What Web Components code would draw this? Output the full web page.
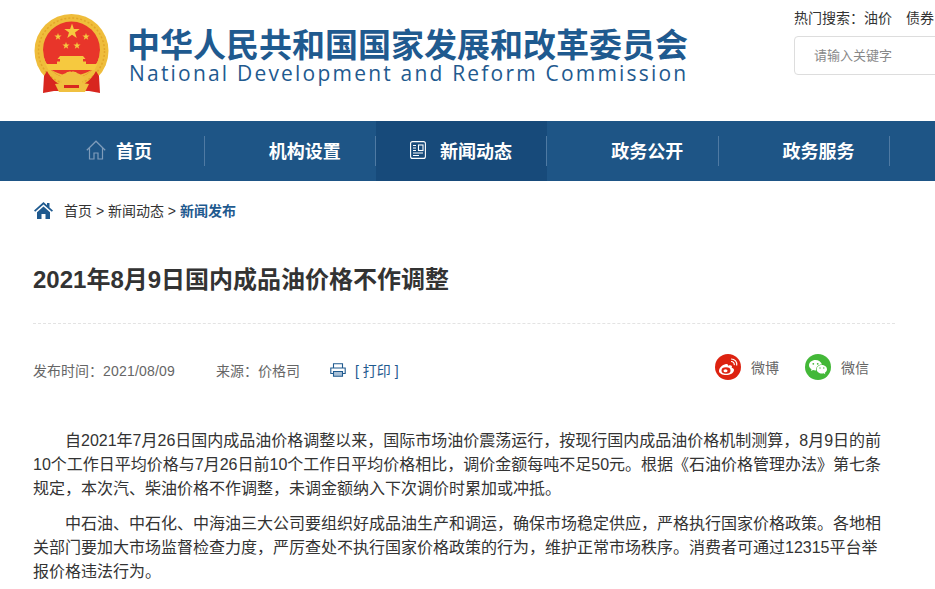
<!DOCTYPE html>
<html lang="zh">
<head>
<meta charset="utf-8">
<title>2021年8月9日国内成品油价格不作调整</title>
<style>
  html, body { margin: 0; padding: 0; background: #fff; }
  body {
    width: 935px;
    height: 589px;
    overflow: hidden;
    font-family: "Liberation Sans", "Noto Sans CJK SC", sans-serif;
    color: #333;
  }
</style>
</head>
<body>
<site-header></site-header>
<site-nav>
  <nav-item pad="52.500">
    <svg slot="icon" width="20" height="20" viewBox="0 0 20 20" fill="none" stroke="#7f9cba" stroke-width="1.2"><path d="M.8 10.2 10 1.2l9.200 9M3.500 8v11h4.500v-6h4v6h4.500V8"/></svg>
    首页
  </nav-item>
  <nav-item pad="64">机构设置</nav-item>
  <nav-item pad="34" active>
    <svg slot="icon" style="margin-right:4px" width="16" height="18" viewBox="0 0 16 18" fill="none" stroke="#fff" stroke-width="1.100"><rect x=".6" y=".6" width="14.800" height="16.800" rx="2"/><path d="M3 4.500h3M3 7h3M3 9.500h3M3 12h10M3 14.500h6"/><rect x="8.500" y="4" width="4.500" height="5.500"/></svg>
    新闻动态
  </nav-item>
  <nav-item pad="64">政务公开</nav-item>
  <nav-item pad="64">政务服务</nav-item>
</site-nav>
<bread-crumb></bread-crumb>
<news-article>
  <span slot="title">2021年8月9日国内成品油价格不作调整</span>
  <article-meta slot="meta"></article-meta>
  <p>自2021年7月26日国内成品油价格调整以来&#xFF0C;国际市场油价震荡运行&#xFF0C;按现行国内成品油价格机制测算&#xFF0C;8月9日的前10个工作日平均价格与7月26日前10个工作日平均价格相比&#xFF0C;调价金额每吨不足50元。根据《石油价格管理办法》第七条规定&#xFF0C;本次汽、柴油价格不作调整&#xFF0C;未调金额纳入下次调价时累加或冲抵。</p>
  <p>中石油、中石化、中海油三大公司要组织好成品油生产和调运&#xFF0C;确保市场稳定供应&#xFF0C;严格执行国家价格政策。各地相关部门要加大市场监督检查力度&#xFF0C;严厉查处不执行国家价格政策的行为&#xFF0C;维护正常市场秩序。消费者可通过12315平台举报价格违法行为。</p>
</news-article>

<template id="header-tpl">
  <style>
    :host { display: flex; height: 121px; width: 935px; overflow: hidden; }
    .logo { flex: none; width: 129px; padding: 14px 0 0 33px; box-sizing: border-box; }
    .name { flex: none; width: 665px; padding-top: 28px; color: #1f5a8f; box-sizing: border-box; }
    .cn { font-size: 33px; line-height: 35px; font-weight: 700; white-space: nowrap; margin-left: -2px; }
    .en { font-family: "Open Sans", sans-serif; font-size: 21px; line-height: 20px; letter-spacing: 2.2px; white-space: nowrap; }
    .search { flex: none; width: 141px; }
    .hot { font-size: 14px; line-height: 18px; padding-top: 9px; color: #333; white-space: nowrap; }
    .hot span { margin-right: 14px; }
    .box { margin-top: 9px; height: 39px; width: 300px; border: 1px solid #ddd; border-radius: 4px; box-sizing: border-box; padding-left: 19px; font-size: 13px; line-height: 37px; color: #888; }
  </style>
  <div class="logo">
    <svg width="78" height="80" viewBox="0 0 78 80">
      <circle cx="38.500" cy="37" r="37" fill="#efbd3b"/>
      <circle cx="38.500" cy="37" r="33" fill="none" stroke="#e2a52a" stroke-width="1.500" stroke-dasharray="2 2"/>
      <circle cx="38.500" cy="36" r="28.500" fill="#e8352a"/>
      <path d="M10 36a28.500 28.500 0 0 0 57 0v12a34 30 0 0 1-57 0z" fill="#efbd3b"/>
      <g fill="#f6c93f">
        <path d="M39 9.500l1.900 5.500h5.800l-4.700 3.500 1.700 5.600-4.700-3.400-4.700 3.400 1.700-5.600-4.700-3.500h5.800z"/>
        <path d="M25 19l.9 2.600h2.700l-2.200 1.600.8 2.600-2.200-1.600-2.200 1.600.8-2.600-2.200-1.600h2.700zM53 19l.9 2.600h2.700l-2.200 1.600.8 2.600-2.200-1.600-2.200 1.600.8-2.600-2.200-1.600h2.700zM33 28l.9 2.600h2.700l-2.200 1.600.8 2.600-2.200-1.600-2.200 1.600.8-2.600-2.200-1.600h2.700zM44 28l.9 2.600h2.700l-2.200 1.600.8 2.600-2.200-1.600-2.200 1.600.8-2.600-2.200-1.600h2.700z"/>
        <path d="M27 42h23l2.500 3h-2.500v2.500h3v2.500h11.500l-3 6h-46l-3-6h11.500v-2.500h3V45h-2.500z"/>
      </g>
      <path d="M14 57C18 65 25 71 33 72L31 77 21 77 10 79 11 62ZM63 57C59 65 52 71 44 72L46 77 56 77 67 79 66 62Z" fill="#d8261f"/>
      <path d="M29 61c2-2 4-1 5-3 2 0 3-1 4.500 0 1.500-1 2.500 0 4.500 0 1 2 3 1 5 3l4 3-3 4c2 1 5 2 7 2l-4 8H26l-4-8c2 0 5-1 7-2l-3-4z" fill="#f0c040"/>
      <path d="M31 71h15v3H31z" fill="#d8261f"/>
    </svg>
  </div>
  <div class="name">
    <div class="cn">中华人民共和国国家发展和改革委员会</div>
    <div class="en">National Development and Reform Commission</div>
  </div>
  <div class="search">
    <div class="hot">热门搜索&#xFF1A;<span>油价</span><span>债券</span></div>
    <div class="box">请输入关键字</div>
  </div>
</template>

<template id="nav-tpl">
  <style>
    :host { display: flex; height: 60px; padding-left: 33.500px; background: #1e5586; width: 935px; box-sizing: border-box; overflow: hidden; }
  </style>
  <slot></slot>
</template>

<template id="item-tpl">
  <style>
    :host { display: flex; flex: 0 0 171.250px; height: 60px; padding-bottom: 2px; align-items: center; box-sizing: border-box; color: #fff; font-size: 18px; font-weight: 700; position: relative; }
    :host([active]) { background: #174a7a; }
    :host::after { content: ""; position: absolute; right: 0; top: 15px; height: 30px; width: 1px; background: #4f7aa3; }
    .wrap { display: flex; align-items: center; gap: 10px; }
    ::slotted(svg) { flex: none; }
  </style>
  <div class="wrap"><slot name="icon"></slot><span><slot></slot></span></div>
</template>

<template id="crumb-tpl">
  <style>
    :host { display: flex; align-items: center; height: 60px; padding-left: 34px; padding-bottom: 2px; box-sizing: border-box; font-size: 14px; color: #333; gap: 11px; }
    b { color: #1f5a8f; font-weight: 700; }
  </style>
  <svg width="19" height="17" viewBox="0 0 19 17" fill="#1f5a8f"><path d="M9.500 0 0 8.500l1.200 1.300L9.500 2.500l8.300 7.300L19 8.500 15.500 5.400V1h-2.500v2.200z"/><path d="M3 10.200 9.500 4.500l6.500 5.700V17h-4.500v-5h-4v5H3z"/></svg>
  <span>首页 &gt; 新闻动态 &gt; <b>新闻发布</b></span>
</template>

<template id="article-tpl">
  <style>
    :host { display: block; padding: 0 40px 0 33px; }
    h1 { margin: 0; font-size: 24px; line-height: 34px; font-weight: 700; color: #333; padding-top: 22px; padding-bottom: 26px; border-bottom: 1px dashed #e3e3e3; }
    .body { padding-top: 13px; font-size: 16px; line-height: 24px; color: #333; }
    ::slotted(p) { margin: 0 0 11px; padding-right: 3px; text-indent: 2em; }
  </style>
  <h1><slot name="title"></slot></h1>
  <slot name="meta"></slot>
  <div class="body"><slot></slot></div>
</template>

<template id="meta-tpl">
  <style>
    :host { display: flex; align-items: center; height: 92px; font-size: 14px; color: #666; }
    .time { width: 183px; }
    .time i { font-style: normal; letter-spacing: .2px; }
    .from { width: 114px; }
    .print { display: flex; align-items: center; gap: 9px; color: #1f5a8f; flex: 1; }
    .share { display: flex; align-items: center; gap: 10px; margin-right: 26px; margin-top: -6px; }
    .ic { width: 26px; height: 26px; border-radius: 50%; display: flex; align-items: center; justify-content: center; }
    .wb { background: #dd2210; }
    .wx { background: #43b838; }
  </style>
  <span class="time">发布时间&#xFF1A;<i>2021/08/09</i></span>
  <span class="from">来源&#xFF1A;价格司</span>
  <span class="print">
    <svg width="16" height="14" viewBox="0 0 16 14" fill="none" stroke="#1f5a8f" stroke-width="1.100"><path d="M3.500 5V.7h9V5M3.500 10.500H.8V5h14.400v5.500h-2.700"/><path d="M3.500 8.500h9v4.800h-9z" fill="#a9c0d6"/></svg>
    [ 打印 ]
  </span>
  <span class="share">
    <span class="ic wb">
      <svg width="20" height="18" viewBox="0 0 20 18"><path d="M8 6c-4 1-7 4-7 7 0 2.500 3.500 4 7 4 4 0 8-2 8-5 0-1.500-1.500-2-2.300-2.300.6-1.300.3-2.500-1.700-2.500-1 0-2 .5-2 .5s.5-2-2-1.700z" fill="#fff"/><ellipse cx="8" cy="12.500" rx="4.500" ry="3.200" fill="#dd2210"/><ellipse cx="7.500" cy="12.700" rx="2" ry="1.500" fill="#fff"/><path d="M13 3.500c2.300 0 3.600 1.500 3.300 3.700M13 1c4 0 6.300 2.800 5.700 6.500" stroke="#fff" stroke-width="1.200" fill="none"/></svg>
    </span>
    微博
  </span>
  <span class="share">
    <span class="ic wx">
      <svg width="20" height="18" viewBox="0 0 20 18" fill="#fff"><path d="M7.500 2C3.900 2 1 4.300 1 7.200c0 1.700 1 3.100 2.500 4.100L3 13l2-1c.8.200 1.600.4 2.500.4l.6 0C7.800 8.800 10.500 6.300 14 6.500 13.200 3.900 10.600 2 7.500 2z"/><path d="M19 11.300c0-2.500-2.400-4.300-5.200-4.300S8.700 8.800 8.700 11.300s2.400 4.300 5.100 4.300c.7 0 1.300-.1 1.900-.3l1.600.9-.4-1.500c1.200-.8 2.100-2 2.100-3.400z"/><g fill="#43b838"><circle cx="5.300" cy="5.800" r=".9"/><circle cx="9.700" cy="5.800" r=".9"/><circle cx="12" cy="10" r=".7"/><circle cx="15.800" cy="10" r=".7"/></g></svg>
    </span>
    微信
  </span>
</template>

<script>
  // every element clones its own template into an open shadow root
  function defineFromTemplate(name, tplId) {
    const tpl = document.getElementById(tplId);
    customElements.define(name, class extends HTMLElement {
      constructor() {
        super();
        this.attachShadow({ mode: 'open' });
        this.shadowRoot.appendChild(tpl.content.cloneNode(true));
      }
      connectedCallback() {
        if (this.hasAttribute('pad')) {
          this.style.paddingLeft = this.getAttribute('pad') + 'px';
        }
      }
    });
  }

  defineFromTemplate('site-header', 'header-tpl');
  defineFromTemplate('site-nav', 'nav-tpl');
  defineFromTemplate('nav-item', 'item-tpl');
  defineFromTemplate('bread-crumb', 'crumb-tpl');
  defineFromTemplate('news-article', 'article-tpl');
  defineFromTemplate('article-meta', 'meta-tpl');
</script>
</body>
</html>
